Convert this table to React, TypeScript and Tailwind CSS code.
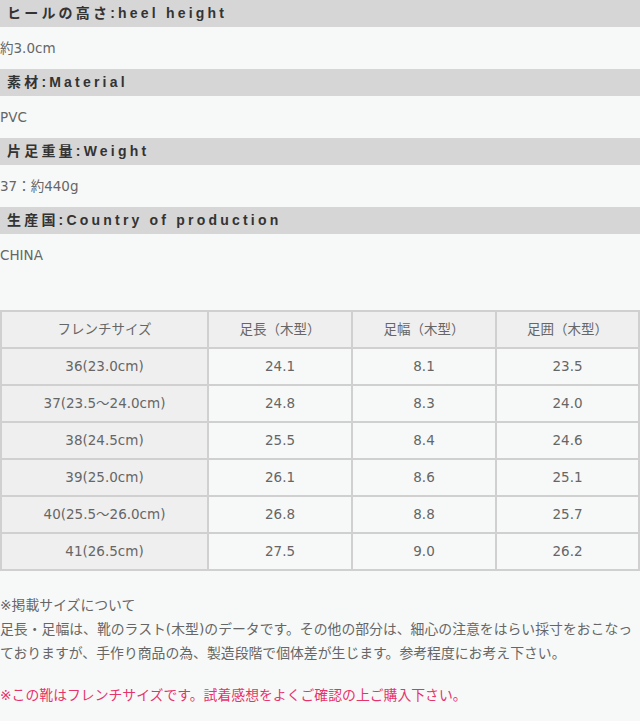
import React from "react";

const specs = [
  { label: "ヒールの高さ:heel height", value: "約3.0cm" },
  { label: "素材:Material", value: "PVC" },
  { label: "片足重量:Weight", value: "37：約440g" },
  { label: "生産国:Country of production", value: "CHINA" },
];

const header = ["フレンチサイズ", "足長（木型）", "足幅（木型）", "足囲（木型）"];

const rows = [
  ["36(23.0cm)", "24.1", "8.1", "23.5"],
  ["37(23.5～24.0cm)", "24.8", "8.3", "24.0"],
  ["38(24.5cm)", "25.5", "8.4", "24.6"],
  ["39(25.0cm)", "26.1", "8.6", "25.1"],
  ["40(25.5～26.0cm)", "26.8", "8.8", "25.7"],
  ["41(26.5cm)", "27.5", "9.0", "26.2"],
];

const body = { fontFamily: '"DejaVu Sans", "Noto Sans CJK JP", sans-serif' };
const bold = { fontFamily: '"Liberation Sans", "Noto Sans CJK JP", sans-serif' };

export default function App() {
  return (
    <div className="w-[640px] min-h-[721px] bg-[#f7f9f8] text-[#666]" style={body}>
      {/* Spec sections */}
      {specs.map((s) => (
        <div key={s.label}>
          <div
            className="h-[27px] bg-[#d6d6d6] flex items-center pl-[7px] text-[14px] font-bold tracking-[3.2px] text-[#333]"
            style={bold}
          >
            {s.label}
          </div>
          <div className="h-[42px] pt-[9px] text-[13.5px] leading-[24px]">{s.value}</div>
        </div>
      ))}

      {/* Size table */}
      <div className="mt-[34px] grid grid-cols-[205px_142px_142px_141px] gap-[2px] p-[2px] bg-[#d0d0d0] text-[13.5px]">
        {header.map((h) => (
          <div key={h} className="h-[35px] bg-[#efefef] flex items-center justify-center">
            {h}
          </div>
        ))}
        {rows.map((r) =>
          r.map((c, i) => (
            <div
              key={r[0] + i}
              className={
                "h-[35px] flex items-center justify-center " +
                (i === 0 ? "bg-[#efefef]" : "bg-[#f7f9f8]")
              }
            >
              {c}
            </div>
          ))
        )}
      </div>

      {/* Notes */}
      <div className="mt-[22px] text-[13.85px] leading-[24px] whitespace-nowrap">
        <div>※掲載サイズについて</div>
        <div>足長・足幅は、靴のラスト(木型)のデータです。その他の部分は、細心の注意をはらい採寸をおこなっ</div>
        <div>ておりますが、手作り商品の為、製造段階で個体差が生じます。参考程度にお考え下さい。</div>
        <div className="mt-[18px] text-[#e6336b]">
          ※この靴はフレンチサイズです。試着感想をよくご確認の上ご購入下さい。
        </div>
      </div>
    </div>
  );
}
